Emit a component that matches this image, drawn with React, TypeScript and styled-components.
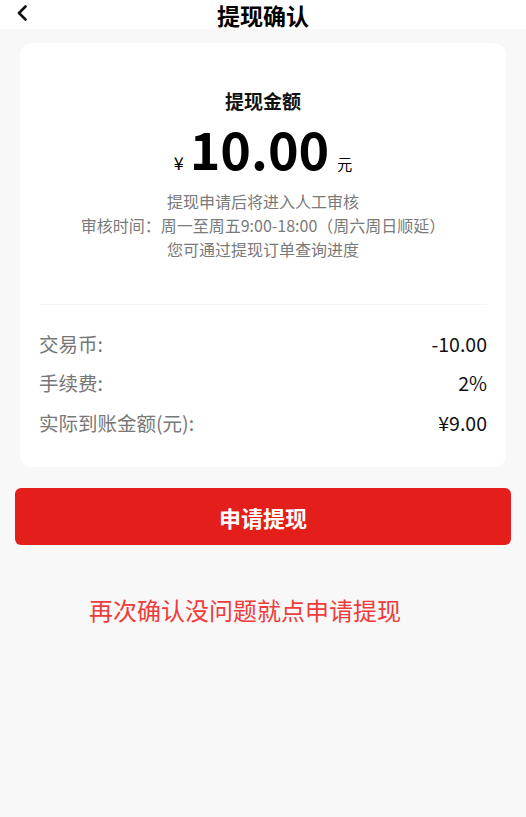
import React from "react";
import styled, { createGlobalStyle } from "styled-components";

const GlobalStyle = createGlobalStyle`
  html, body {
    margin: 0;
    padding: 0;
    background: #f8f8f8;
    font-family: "Noto Sans CJK SC", "Noto Sans", sans-serif;
  }
`;

interface Row {
  label: string;
  value: string;
}

const rows: Row[] = [
  { label: "交易币:", value: "-10.00" },
  { label: "手续费:", value: "2%" },
  { label: "实际到账金额(元):", value: "¥9.00" },
];

function App() {
  return (
    <Page>
      <GlobalStyle />
      <Header>
        <BackButton aria-label="back">
          <svg width="12" height="16" viewBox="0 0 12 16">
            <path
              d="M9.5 1.5 L3 8 L9.5 14.5"
              fill="none"
              stroke="#111"
              strokeWidth="2.6"
              strokeLinecap="round"
              strokeLinejoin="round"
            />
          </svg>
        </BackButton>
        <Title>提现确认</Title>
      </Header>

      <Card>
        <AmountBlock>
          <AmountLabel>提现金额</AmountLabel>
          <AmountLine>
            <Currency>¥</Currency>
            <Amount>10.00</Amount>
            <Unit>元</Unit>
          </AmountLine>
          <Notice>
            <div>提现申请后将进入人工审核</div>
            <div>审核时间：周一至周五9:00-18:00（周六周日顺延）</div>
            <div>您可通过提现订单查询进度</div>
          </Notice>
        </AmountBlock>
        <Divider />
        <DetailList>
          {rows.map((row) => (
            <DetailRow key={row.label}>
              <span className="label">{row.label}</span>
              <span className="value">{row.value}</span>
            </DetailRow>
          ))}
        </DetailList>
      </Card>

      <SubmitButton>申请提现</SubmitButton>

      <Hint>再次确认没问题就点申请提现</Hint>
    </Page>
  );
}

const Page = styled.div`
  min-height: 817px;
  background: #f8f8f8;
`;

const Header = styled.div`
  position: relative;
  display: flex;
  align-items: center;
  justify-content: center;
  height: 29px;
  background: #fff;
`;

const BackButton = styled.button`
  position: absolute;
  left: 16px;
  top: 5px;
  display: flex;
  padding: 0;
  border: none;
  background: none;
`;

const Title = styled.div`
  font-size: 23px;
  font-weight: 700;
  color: #000;
  line-height: 25px;
  margin-top: 2px;
`;

const Card = styled.div`
  margin: 14px 20px 0;
  padding: 0 19px 30px;
  background: #fff;
  border-radius: 12px;
`;

const AmountBlock = styled.div`
  display: flex;
  flex-direction: column;
  align-items: center;
  padding-top: 45px;
  padding-bottom: 43px;
`;

const AmountLabel = styled.div`
  font-size: 19px;
  font-weight: 700;
  color: #111;
  line-height: 26px;
`;

const AmountLine = styled.div`
  display: flex;
  align-items: baseline;
  margin-top: 9px;
  color: #000;
  line-height: 50px;
`;

const Currency = styled.span`
  font-size: 18px;
  margin-right: 6px;
`;

const Amount = styled.span`
  font-size: 52px;
  font-weight: 700;
`;

const Unit = styled.span`
  font-size: 15px;
  margin-left: 8px;
`;

const Notice = styled.div`
  margin-top: 0;
  font-size: 16px;
  line-height: 24px;
  color: #7a7a7a;
  text-align: center;
`;

const Divider = styled.div`
  height: 1px;
  background: #f3f3f3;
`;

const DetailList = styled.div`
  display: flex;
  flex-direction: column;
  gap: 9.5px;
  padding-top: 23px;
`;

const DetailRow = styled.div`
  display: flex;
  justify-content: space-between;
  align-items: center;
  height: 30px;
  font-size: 19.5px;

  .label {
    color: #777;
  }

  .value {
    color: #111;
  }
`;

const SubmitButton = styled.button`
  display: block;
  width: calc(100% - 30px);
  height: 57px;
  margin: 21px 15px 0;
  border: none;
  border-radius: 6px;
  background: #e41e1a;
  color: #fff;
  font-family: "Noto Sans CJK SC", sans-serif;
  font-size: 22px;
  font-weight: 700;
`;

const Hint = styled.div`
  margin-top: 50px;
  padding-left: 89px;
  font-size: 24px;
  line-height: 30px;
  color: #ef3b3b;
`;

export default App;
